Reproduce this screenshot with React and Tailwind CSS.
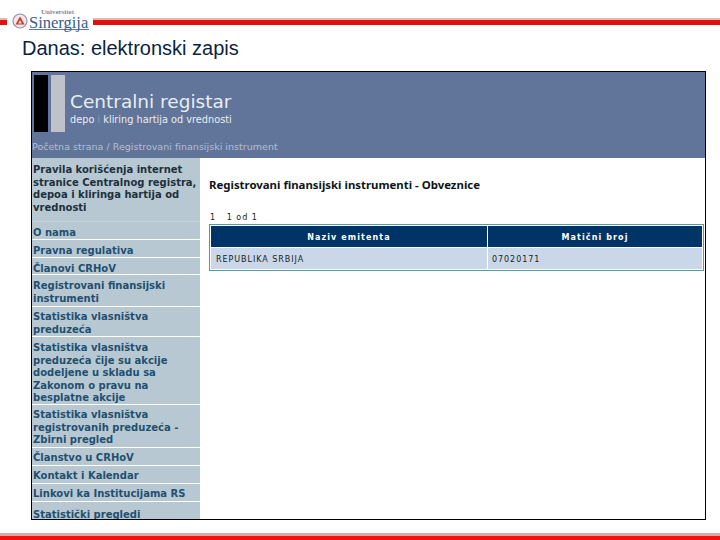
const dv = { fontFamily: '"DejaVu Sans", Verdana, sans-serif' };

const items = [
  { lines: ["O nama"], h: "h-[18px]", p: "pt-[5px]" },
  { lines: ["Pravna regulativa"], h: "h-[18px]", p: "pt-[5px]" },
  { lines: ["Članovi CRHoV"], h: "h-[17px]", p: "pt-[5px]" },
  { lines: ["Registrovani finansijski", "instrumenti"], h: "h-[32px]", p: "pt-[5px]" },
  { lines: ["Statistika vlasništva", "preduzeća"], h: "h-[30px]", p: "pt-[4px]" },
  { lines: ["Statistika vlasništva", "preduzeća čije su akcije", "dodeljene u skladu sa", "Zakonom o pravu na", "besplatne akcije"], h: "h-[68px]", p: "pt-[5px]" },
  { lines: ["Statistika vlasništva", "registrovanih preduzeća -", "Zbirni pregled"], h: "h-[43px]", p: "pt-[4px]" },
  { lines: ["Članstvo u CRHoV"], h: "h-[18px]", p: "pt-[4px]" },
  { lines: ["Kontakt i Kalendar"], h: "h-[18px]", p: "pt-[4px]" },
  { lines: ["Linkovi ka Institucijama RS"], h: "h-[18px]", p: "pt-[4px]" },
];

function Bar({ className }) {
  return (
    <div className={"flex flex-col h-[7px] " + className}>
      <div className="h-[2px] bg-[#e3b5b3]" />
      <div className="h-[5px] bg-[#e0120f]" />
    </div>
  );
}

function Logo() {
  return (
    <div className="flex items-end w-[86px] pl-[5px] gap-[1px] shrink-0">
      <svg width="16" height="16" viewBox="0 0 16 16" className="mb-[1px] shrink-0">
        <circle cx="8" cy="8" r="7" fill="#f4e6e4" stroke="#8c94ad" strokeWidth="1.2" />
        <path d="M8 3.5 L12.5 11.5 H3.5 Z" fill="#c8362f" />
        <path d="M8 7 L10 10.5 H6 Z" fill="#f4d9d4" />
      </svg>
      <div className="relative leading-none text-[#3a5c90] border-b border-[#5a78a6] w-[60px]" style={{ fontFamily: '"Liberation Serif", serif' }}>
        <span className="absolute left-[12px] top-[-2px] text-[7px] leading-none font-bold text-[#7d8aa6] whitespace-nowrap">Universitet</span>
        <span className="block text-[16.5px] leading-[13px] mt-[5px] whitespace-nowrap">Sinergija</span>
      </div>
    </div>
  );
}

export default function App() {
  return (
    <div className="w-[720px] h-[540px] bg-white flex flex-col overflow-hidden" style={{ fontFamily: '"Liberation Sans", Arial, sans-serif' }}>
      <div className="h-[32px] flex items-start pt-[11px] shrink-0">
        <Bar className="w-[7px] mt-[7px]" />
        <Logo />
        <Bar className="flex-1 mt-[7px]" />
      </div>
      <h1 className="h-[39px] pl-[22px] text-[20px] leading-[32px] font-normal text-[#0b1f45] shrink-0">Danas: elektronski zapis</h1>

      <div className="ml-[31px] w-[675px] h-[449px] border-[1.5px] border-black flex flex-col shrink-0 overflow-hidden" style={dv}>
        <div className="h-[86px] bg-[#61749a] flex flex-col shrink-0">
          <div className="flex pl-[2px] pt-[3px] h-[60px] gap-[3px]">
            <div className="w-[14px] h-[57px] bg-black" />
            <div className="w-[14px] h-[57px] bg-[#bfc2c8]" />
            <div className="pl-[2px] pt-[16px] text-[#e9edf3]">
              <div className="text-[18.5px] leading-[22px] whitespace-nowrap">Centralni registar</div>
              <div className="text-[9.75px] leading-[12px] mt-[1px] whitespace-nowrap">depo <span className="text-[#8e9cb8]">i</span> kliring hartija od vrednosti</div>
            </div>
          </div>
          <div className="pt-[9px] text-[9.5px] leading-[12px] tracking-[0.02px] text-[#b4bfd0] whitespace-nowrap">Početna strana / Registrovani finansijski instrument</div>
        </div>

        <div className="flex flex-1 min-h-0">
          <nav className="w-[168px] bg-[#b8c8d3] shrink-0 flex flex-col text-[10px] leading-[12.5px] font-bold text-[#1f5070] overflow-hidden">
            <div className="h-[64px] pl-[1px] pt-[6px] text-[#20303c] border-b border-[#c5d2db] shrink-0">
              <div className="whitespace-nowrap">Pravila korišćenja internet</div>
              <div className="whitespace-nowrap">stranice Centralnog registra,</div>
              <div className="whitespace-nowrap">depoa i kliringa hartija od</div>
              <div className="whitespace-nowrap">vrednosti</div>
            </div>
            {items.map((it, i) => (
              <div key={i} className={"pl-[1px] border-b border-white shrink-0 box-border " + it.h + " " + it.p}>
                {it.lines.map((l) => (
                  <div key={l} className="whitespace-nowrap">{l}</div>
                ))}
              </div>
            ))}
            <div className="pl-[1px] pt-[7px] whitespace-nowrap">Statistički pregledi</div>
          </nav>

          <main className="flex-1 pl-[9px] pr-[1px] pt-[20px] min-w-0">
            <h2 className="text-[11.4px] leading-[14px] font-bold text-[#101418] whitespace-nowrap" style={{ fontFamily: '"Noto Sans", sans-serif' }}>Registrovani finansijski instrumenti - Obveznice</h2>
            <div className="mt-[21px] text-[8px] leading-[10px] tracking-[1px] text-[#222] pl-[1px] whitespace-pre">1   1 od 1</div>
            <div className="mt-[1px] w-[495px] border border-[#4f9ba5] p-[1px] grid grid-cols-[276px_1fr] gap-[1px] bg-white text-[8px]">
              <div className="h-[21px] pt-[2px] bg-[#003366] text-white font-bold tracking-[1.1px] flex items-center justify-center">Naziv emitenta</div>
              <div className="h-[21px] pt-[2px] bg-[#003366] text-white font-bold tracking-[1.1px] flex items-center justify-center">Matični broj</div>
              <div className="h-[21px] pt-[2px] bg-[#c9d7e8] text-[#222] tracking-[0.95px] flex items-center pl-[5px]">REPUBLIKA SRBIJA</div>
              <div className="h-[21px] pt-[2px] bg-[#c9d7e8] text-[#222] tracking-[0.95px] flex items-center pl-[4px]">07020171</div>
            </div>
          </main>
        </div>
      </div>

      <div className="mt-auto flex flex-col shrink-0">
        <div className="h-[3px] bg-[#d9a9a4]" />
        <div className="h-[4px] bg-[#fb0f0c]" />
      </div>
    </div>
  );
}
